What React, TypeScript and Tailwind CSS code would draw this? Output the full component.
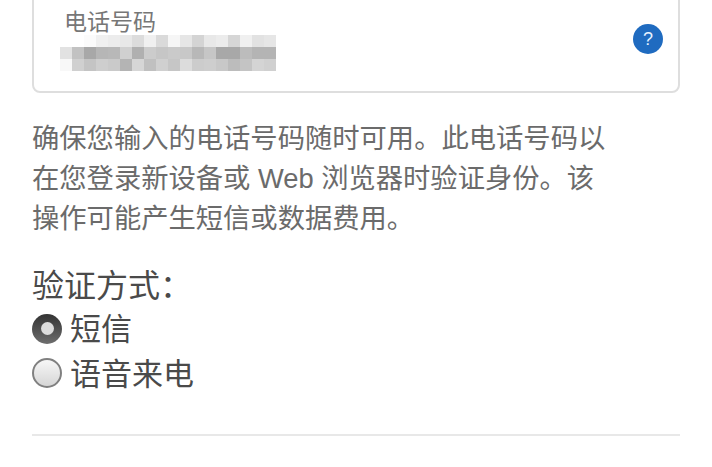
const mosaic = [
  ['#ffffff', '#ffffff', '#fbfbfb', '#f0f0f0', '#ececec', '#e8e8e8', '#dcdcdc', '#f0f0f0', '#dadada', '#f6f6f6', '#e6e6e6', '#d4d4d4', '#e8e8e8', '#ececec', '#d6d6d6', '#f0f0f0', '#e2e2e2', '#e6e6e6'],
  ['#e2e2e2', '#c2c2c2', '#a8a8a8', '#b6b6b6', '#b8b8b8', '#d0d0d0', '#b0b0b0', '#cccccc', '#c6c6c6', '#cacaca', '#c8c8c8', '#b8b8b8', '#c6c6c6', '#a8a8a8', '#a8a8a8', '#bcbcbc', '#b4b4b4', '#b4b4b4'],
  ['#f8f8f8', '#d0d0d0', '#c4c4c4', '#cecece', '#cacaca', '#b4b4b4', '#d6d6d6', '#c0c0c0', '#d0d0d0', '#c6c6c6', '#dcdcdc', '#cccccc', '#cecece', '#c8c8c8', '#bcbcbc', '#c4c4c4', '#d4d4d4', '#d0d0d0'],
]

export default function App() {
  return (
    <div className="h-[467px] w-[712px] overflow-hidden bg-white px-8 font-['Liberation_Sans','Noto_Sans_CJK_SC',sans-serif]">
      <div className="-mt-5 flex h-[113px] items-start justify-between rounded-b-lg border-2 border-[#dedede] pr-[15px] pl-[30px]">
        <div className="pt-[25px]">
          <div className="text-[23px] leading-[30px] text-[#777777]">电话号码</div>
          <div className="-mt-[2px] -ml-[4px] grid w-[216px] grid-cols-[repeat(18,12px)] grid-rows-[repeat(3,12px)] blur-[0.5px]">
            {mosaic.flat().map((color, i) => (
              <div key={i} style={{ backgroundColor: color }} />
            ))}
          </div>
        </div>
        <div className="mt-[42px] flex h-[30px] w-[30px] items-center justify-center rounded-full bg-[#1f6bc0] text-[18px] text-[#e6f2ff]">
          ?
        </div>
      </div>

      <p className="mt-[26px] text-[27.3px] leading-[40px] text-[#6b6b6b]">
        确保您输入的电话号码随时可用。此电话号码以
        <br />
        在您登录新设备或 Web 浏览器时验证身份。该
        <br />
        操作可能产生短信或数据费用。
      </p>

      <div className="mt-[25px] text-[32px] leading-[44px] text-[#4a4a4a]">验证方式：</div>
      <div className="flex h-[45px] items-center gap-[8px] text-[31px] text-[#4a4a4a]">
        <span className="mb-[4px] flex h-[30px] w-[30px] items-center justify-center rounded-full bg-gradient-to-b from-[#333333] to-[#6e6e6e]">
          <span className="h-[13px] w-[13px] rounded-full bg-[#dcdcdc]" />
        </span>
        短信
      </div>
      <div className="flex h-[45px] items-center gap-[8px] text-[31px] text-[#4a4a4a]">
        <span className="mb-[5px] h-[30px] w-[30px] rounded-full border-2 border-[#808080] bg-gradient-to-b from-[#f7f7f7] to-[#d6d6d6]" />
        语音来电
      </div>

      <div className="mt-[36px] h-[2px] bg-[#e8e8e8]" />
    </div>
  )
}
